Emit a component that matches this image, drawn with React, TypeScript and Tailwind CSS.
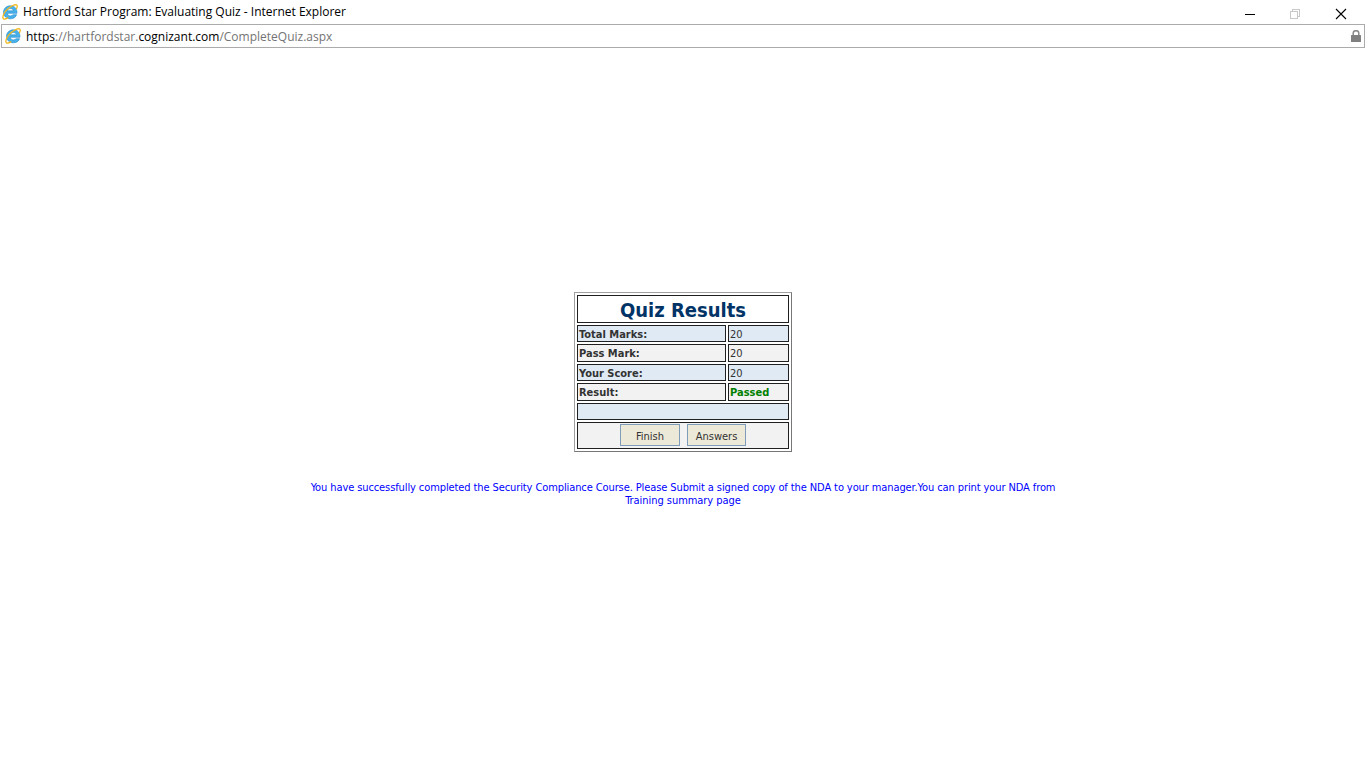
import type { ReactNode } from "react";

function ExplorerIcon({ className }: { className?: string }) {
  return (
    <svg viewBox="0 0 16 16" className={className} fill="none">
      <path
        d="M15 9.300H5.300c.3 1.700 1.500 2.600 3.200 2.600 1.200 0 2-.4 2.500-1.200h3.600c-.8 2.500-3 4.100-6.100 4.100-4 0-7-2.700-7-6.500S4.500 1.800 8.500 1.800c4.100 0 6.700 3 6.500 7.500ZM11.400 6.800C11.100 5.400 10 4.600 8.500 4.600S5.700 5.400 5.300 6.800Z"
        fill="#46b1ea"
        stroke="#2289cc"
        strokeWidth=".6"
      />
      <path
        d="M1.500 14.900C-.3 13.200 2 8.200 6.200 4.600 10.300 1.100 14 .1 14.900 1.200c.6.8.3 2.100-.4 3.500M1.500 14.900c1 .6 2.700 0 4.300-1"
        stroke="#f3b71c"
        strokeWidth="1.300"
        strokeLinecap="round"
      />
    </svg>
  );
}

function TitleBar() {
  return (
    <header className="flex h-6 items-center">
      <ExplorerIcon className="ml-[2px] size-4 shrink-0" />
      <h1 className="ml-[5px] whitespace-nowrap text-[12px] leading-4 text-black">
        Hartford Star Program: Evaluating Quiz - Internet Explorer
      </h1>
      <div className="ml-auto mr-[19px] flex h-full items-center pt-[4px]">
        <svg className="mr-[33px] size-[12px]" viewBox="0 0 12 12" shapeRendering="crispEdges">
          <path d="M1 6.500H11" stroke="#000" />
        </svg>
        <svg className="mr-[34px] size-[12px]" viewBox="0 0 12 12" fill="none" stroke="#c8c8c8" shapeRendering="crispEdges">
          <path d="M1.500 3.500h7v7h-7zM3.500 3V1.500h7v7H9" />
        </svg>
        <svg className="size-[12px]" viewBox="0 0 12 12" fill="none" stroke="#000" strokeWidth="1.100">
          <path d="M1 1L11 11M11 1L1 11" />
        </svg>
      </div>
    </header>
  );
}

function AddressBar() {
  return (
    <div className="mx-px flex h-6 items-center border border-[#ababab] bg-white">
      <ExplorerIcon className="ml-[3px] size-4 shrink-0" />
      <p className="ml-[5px] whitespace-nowrap pt-[2px] text-[12px] leading-4 text-[#747474]">
        <span className="text-black">https</span>://hartfordstar.<span className="text-black">cognizant.com</span>
        /CompleteQuiz.aspx
      </p>
      <svg className="ml-auto mr-[3px] h-[12px] w-[10px]" viewBox="0 0 10 12">
        <path d="M2.200 6V3.200a2.800 2.500 0 0 1 5.600 0V6" fill="none" stroke="#8a8a8a" strokeWidth="1.500" />
        <rect y="5" width="10" height="7" rx=".6" fill="#808080" />
      </svg>
    </div>
  );
}

function Label({ tint, children }: { tint: string; children: ReactNode }) {
  return (
    <div className={`flex items-center border border-[#202020] pl-px text-[11px] font-bold leading-none text-[#333] ${tint}`}>
      {children}
    </div>
  );
}

function Value({ tint, children }: { tint: string; children: ReactNode }) {
  return <div className={`flex items-center border border-[#202020] pl-px leading-none text-[#333] ${tint}`}>{children}</div>;
}

const BLUE = "bg-[#dfeaf5] pt-px";
const GRAY = "bg-[#f2f2f2]";

function QuizResults() {
  return (
    <section className="grid h-[160px] w-[218px] grid-cols-[149px_61px] grid-rows-[28px_17px_18px_17px_18px_17px_27px] gap-[2px] border border-[#777] border-l-[#a0a0a0] border-t-[#a0a0a0] p-[2px] text-[11px]">
      <h2 className="col-span-2 flex items-center justify-center border border-[#202020] pt-px text-[20px] font-bold leading-none text-[#003366]">
        Quiz Results
      </h2>
      <Label tint={BLUE}>Total Marks:</Label>
      <Value tint={BLUE}>20</Value>
      <Label tint="bg-[#f2f2f2] pt-px">Pass Mark:</Label>
      <Value tint="bg-[#f2f2f2] pt-px">20</Value>
      <Label tint={BLUE}>Your Score:</Label>
      <Value tint={BLUE}>20</Value>
      <Label tint={GRAY}>Result:</Label>
      <Value tint={GRAY}>
        <span className="font-bold text-[#008000]">Passed</span>
      </Value>
      <div className={`col-span-2 border border-[#202020] ${BLUE}`} />
      <div className="col-span-2 flex justify-center gap-[7px] border border-[#202020] bg-[#f2f2f2] pt-px">
        <button className="h-[22px] w-[60px] border border-[#7f9db9] bg-[#ece9d8] pt-[2px] leading-none text-[#333]">Finish</button>
        <button className="h-[22px] w-[59px] border border-[#7f9db9] bg-[#ece9d8] pt-[2px] leading-none text-[#333]">Answers</button>
      </div>
    </section>
  );
}

export default function App() {
  return (
    <div className="flex h-screen w-screen flex-col overflow-hidden bg-white [font-family:'Open_Sans','Noto_Sans',sans-serif]">
      <TitleBar />
      <AddressBar />
      <main className="flex flex-1 flex-col items-center pt-[244px] [font-family:'DejaVu_Sans_Condensed','DejaVu_Sans',sans-serif] [font-stretch:condensed]">
        <QuizResults />
        <div className="mt-[29px] flex flex-col items-center whitespace-nowrap text-[11px] leading-[13px] tracking-[-0.1px] text-[#0000ff]">
          <p>
            You have successfully completed the Security Compliance Course. Please Submit a signed copy of the NDA to
            your manager.You can print your NDA from
          </p>
          <p className="tracking-[-0.05px]">Training summary page</p>
        </div>
      </main>
    </div>
  );
}
